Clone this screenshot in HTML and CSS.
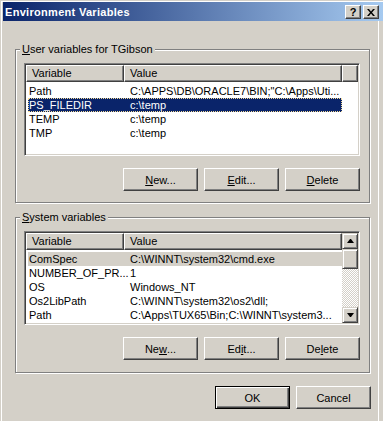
FILE: index.html
```html
<!DOCTYPE html>
<html>
<head>
    <title>Environment Variables</title>
    <meta charset="utf-8">
    <link rel="stylesheet" href="styles.css">
</head>
<body>
    <div class="window">
        <div class="titlebar">
            <span class="title">Environment Variables</span>
            <div class="caption-btns">
                <div class="cap-btn help">?</div>
                <div class="cap-btn">
                    <svg width="8" height="7" viewBox="0 0 8 7"><path d="M0 0h2l2 2.4 2-2.4h2l-3 3.5 3 3.5h-2l-2-2.4-2 2.4h-2l3-3.5z" fill="#000"/></svg>
                </div>
            </div>
        </div>
        <div class="client">
            <div class="group">
                <span class="legend"><u>U</u>ser variables for TGibson</span>
                <div class="listview">
                    <div class="lv-main">
                        <div class="lv-header">
                            <div class="hcell col-var">Variable</div>
                            <div class="hcell col-val">Value</div>
                            <div class="hcell filler"></div>
                        </div>
                        <div class="lv-rows">
                            <div class="row"><span class="c1">Path</span><span class="c2">C:\APPS\DB\ORACLE7\BIN;"C:\Apps\Uti...</span></div>
                            <div class="row selected"><span class="c1">PS_FILEDIR</span><span class="c2">c:\temp</span></div>
                            <div class="row"><span class="c1">TEMP</span><span class="c2">c:\temp</span></div>
                            <div class="row"><span class="c1">TMP</span><span class="c2">c:\temp</span></div>
                        </div>
                    </div>
                </div>
                <div class="btn-row">
                    <div class="btn"><u>N</u>ew...</div>
                    <div class="btn"><u>E</u>dit...</div>
                    <div class="btn"><u>D</u>elete</div>
                </div>
            </div>

            <div class="group system">
                <span class="legend"><u>S</u>ystem variables</span>
                <div class="listview">
                    <div class="lv-main">
                        <div class="lv-header">
                            <div class="hcell col-var">Variable</div>
                            <div class="hcell col-val">Value</div>
                        </div>
                        <div class="lv-rows">
                            <div class="row inactive"><span class="c1">ComSpec</span><span class="c2">C:\WINNT\system32\cmd.exe</span></div>
                            <div class="row"><span class="c1">NUMBER_OF_PR...</span><span class="c2">1</span></div>
                            <div class="row"><span class="c1">OS</span><span class="c2">Windows_NT</span></div>
                            <div class="row"><span class="c1">Os2LibPath</span><span class="c2">C:\WINNT\system32\os2\dll;</span></div>
                            <div class="row"><span class="c1">Path</span><span class="c2">C:\Apps\TUX65\Bin;C:\WINNT\system3...</span></div>
                        </div>
                    </div>
                    <div class="scrollbar">
                        <div class="sb-btn"><svg width="7" height="4" viewBox="0 0 7 4"><path d="M3 0h1l3 4H0z" fill="#000"/></svg></div>
                        <div class="sb-btn thumb"></div>
                        <div class="sb-track"></div>
                        <div class="sb-btn"><svg width="7" height="4" viewBox="0 0 7 4"><path d="M0 0h7L4 4H3z" fill="#000"/></svg></div>
                    </div>
                </div>
                <div class="btn-row">
                    <div class="btn">Ne<u>w</u>...</div>
                    <div class="btn">Ed<u>i</u>t...</div>
                    <div class="btn">De<u>l</u>ete</div>
                </div>
            </div>

            <div class="footer">
                <div class="btn default">OK</div>
                <div class="btn">Cancel</div>
            </div>
        </div>
    </div>
</body>
</html>
```

FILE: styles.css
```css
* { margin: 0; padding: 0; box-sizing: border-box; }
body { font-family: "Liberation Sans", Arial, sans-serif; font-size: 11px; color: #000; background: #d4d0c8; overflow: hidden; }

.window { width: 382px; height: 420px; margin: 1px 0 0 1px; border-top: 1px solid #fff; border-left: 1px solid #fff; }

/* caption */
.titlebar { display: flex; align-items: flex-start; height: 19px; margin-left: 1px; padding: 3px 4px 0 2px; background: linear-gradient(to right, #0a246a, #a6caf0); }
.title { color: #fff; font-weight: bold; line-height: 13px; letter-spacing: 0.3px; margin-top: 1px; }
.caption-btns { display: flex; gap: 2px; margin-left: auto; }
.cap-btn { width: 16px; height: 14px; display: flex; align-items: center; justify-content: center; background: #d4d0c8; border: 1px solid; border-color: #fff #404040 #404040 #fff; box-shadow: inset -1px -1px #808080; }
.cap-btn.help { font-weight: bold; font-size: 11px; line-height: 12px; }

/* dialog body */
.client { width: 377px; height: 400px; border-right: 1px solid #fff; padding: 28px 0 0 13px; }

.group { position: relative; width: 355px; padding: 13px 0 11px 8px; border: 1px solid #808080; box-shadow: 1px 1px 0 #fff, inset 1px 1px 0 #fff; }
.group.system { margin-top: 14px; padding-bottom: 12px; }
.legend { position: absolute; top: -7px; left: 4px; padding: 0 2px; line-height: 13px; background: #d4d0c8; }

/* list view */
.listview { display: flex; width: 336px; height: 93px; padding: 1px; background: #fff; border: 1px solid; border-color: #808080 #fff #fff #808080; box-shadow: inset 1px 1px #404040, inset -1px -1px #d4d0c8; }
.system .listview { height: 94px; }
.lv-main { flex: 1; overflow: hidden; }
.lv-header { display: flex; height: 17px; }
.hcell { height: 17px; padding-left: 5px; line-height: 15px; background: #d4d0c8; border: 1px solid; border-color: #fff #404040 #404040 #fff; box-shadow: inset -1px -1px #808080; }
.col-var { width: 98px; }
.col-val { width: 218px; }
.filler { flex: 1; }
.lv-rows { padding-top: 2px; }
.row { display: flex; width: 314px; height: 14px; margin-left: 2px; line-height: 14px; white-space: nowrap; }
.row .c1 { width: 96px; padding-left: 1px; }
.row .c2 { padding-left: 6px; }
.row.selected { background: #0a246a; color: #fff; outline: 1px dotted #f5db95; outline-offset: -1px; }
.row.inactive { background: #d4d0c8; }

/* scroll bar */
.scrollbar { display: flex; flex-direction: column; width: 16px; }
.sb-btn { height: 16px; display: flex; align-items: center; justify-content: center; background: #d4d0c8; border: 1px solid; border-color: #d4d0c8 #404040 #404040 #d4d0c8; box-shadow: inset 1px 1px #fff, inset -1px -1px #808080; }
.sb-btn.thumb { height: 20px; }
.sb-track { flex: 1; background: repeating-conic-gradient(#fff 0 25%, #d4d0c8 0 50%) 0 0 / 2px 2px; }

/* buttons */
.btn-row { display: flex; justify-content: flex-end; gap: 6px; width: 336px; margin-top: 12px; }
.btn { width: 75px; height: 23px; display: flex; align-items: center; justify-content: center; background: #d4d0c8; border: 1px solid; border-color: #fff #404040 #404040 #fff; box-shadow: inset -1px -1px #808080; }
.btn.default { border-color: #000; box-shadow: inset 1px 1px #fff, inset -1px -1px #404040, inset -2px -2px #808080; }
.footer { display: flex; justify-content: flex-end; gap: 6px; width: 356px; margin-top: 13px; }
```
